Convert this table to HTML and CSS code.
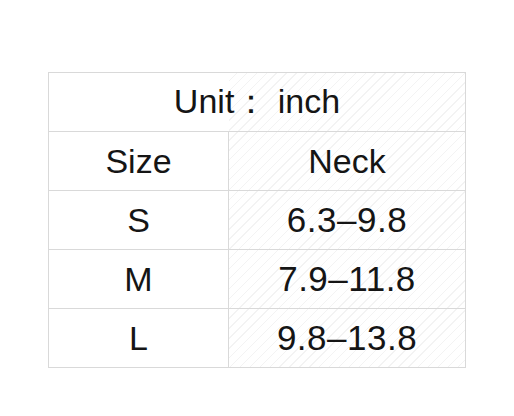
FILE: index.html
```html
<!DOCTYPE html>
<html>
<head>
<meta charset="utf-8">
<link rel="stylesheet" href="styles.css">
</head>
<body>
<div class="page">
  <div class="chart">
    <div class="cell head">Unit： inch</div>
    <div class="cell">Size</div>
    <div class="cell">Neck</div>
    <div class="cell">S</div>
    <div class="cell num">6.3–9.8</div>
    <div class="cell">M</div>
    <div class="cell num">7.9–11.8</div>
    <div class="cell">L</div>
    <div class="cell num">9.8–13.8</div>
  </div>
</div>
</body>
</html>
```
FILE: styles.css
```css
html, body {
  margin: 0;
  padding: 0;
  background: #ffffff;
}
.page {
  width: 514px;
  height: 416px;
  padding: 72px 0 0 48px;
  box-sizing: border-box;
}
.chart {
  display: grid;
  grid-template-columns: 180px 237px;
  grid-auto-rows: 59px;
  width: 418px;
  border-left: 1px solid #d9d9d9;
  border-top: 1px solid #d9d9d9;
  box-sizing: border-box;
  background:
    linear-gradient(#ffffff, #ffffff) 0 0 / 180px 100% no-repeat,
    repeating-linear-gradient(-45deg, #ffffff 0, #ffffff 6px, #f3f3f3 6px, #f3f3f3 7px);
  font-family: "Liberation Sans", Arial, sans-serif;
  font-size: 34px;
  color: #151515;
}
.cell {
  display: flex;
  align-items: center;
  justify-content: center;
  border-right: 1px solid #d9d9d9;
  border-bottom: 1px solid #d9d9d9;
  box-sizing: border-box;
}
.num {
  font-size: 35px;
  letter-spacing: 0.5px;
}
.head {
  grid-column: 1 / 3;
}
```
